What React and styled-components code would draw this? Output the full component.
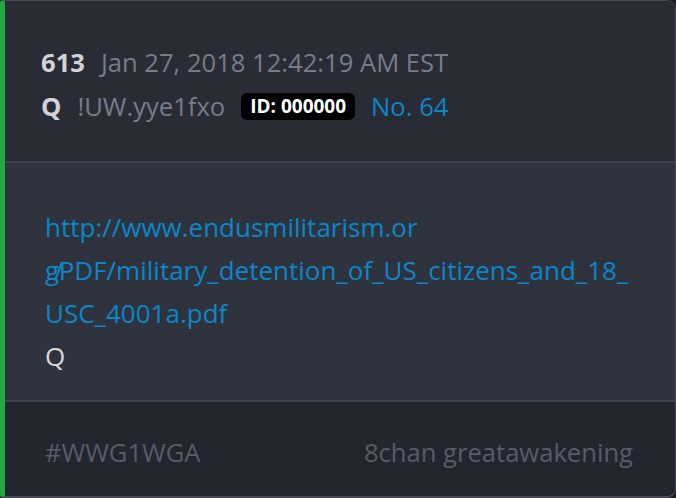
import React from 'react';
import styled, { createGlobalStyle } from 'styled-components';

const GlobalStyle = createGlobalStyle`
  html, body {
    margin: 0;
    padding: 0;
    background: #1c1e24;
  }
  body {
    font-family: 'Open Sans', 'Noto Sans', sans-serif;
  }
`;

const Card = styled.article`
  box-sizing: border-box;
  width: 676px;
  height: 498px;
  display: flex;
  flex-direction: column;
  border: 1px solid #464a54;
  border-bottom-width: 2px;
  border-left: 5px solid #22a845;
  border-radius: 3px 9px 9px 4px;
  overflow: hidden;
  background: #22262e;
`;

const Header = styled.header`
  box-sizing: border-box;
  height: 162px;
  background: #292c35;
  padding: 39px 36px 0;
  border-bottom: 2px solid #3c404a;
`;

const MetaRow = styled.div`
  display: flex;
  align-items: center;
  gap: 16px;
  height: 44px;
  font-size: 25.6px;
  color: #777c8a;
`;

const Strong = styled.span`
  font-weight: 700;
  color: #d3d3d6;
`;

const Badge = styled.span`
  background: #000;
  color: #fff;
  font-weight: 700;
  font-size: 19px;
  line-height: 27px;
  padding: 0 9px;
  border-radius: 6px;
`;

const Link = styled.a`
  color: #0a86c9;
  text-decoration: none;
`;

const Body = styled.section`
  flex: 1;
  background: #2e333d;
  padding: 43px 40px 0;
  border-bottom: 2px solid #3e424c;
  font-size: 26px;
  line-height: 43px;
  color: #d8d8dc;
`;

const Url = styled(Link)`
  display: block;
`;

const UrlLine = styled.span`
  display: block;
  white-space: nowrap;
`;

const Squeezed = styled.span`
  letter-spacing: -5px;
`;

const Footer = styled.footer`
  box-sizing: border-box;
  display: flex;
  justify-content: space-between;
  align-items: center;
  height: 94px;
  padding: 6px 42px 0 40px;
  font-size: 25.6px;
  color: #575c68;
`;

export default function App() {
  return (
    <>
      <GlobalStyle />
      <Card>
        <Header>
          <MetaRow>
            <Strong>613</Strong>
            <span>Jan 27, 2018 12:42:19 AM EST</span>
          </MetaRow>
          <MetaRow>
            <Strong>Q</Strong>
            <span>!UW.yye1fxo</span>
            <Badge>ID: 000000</Badge>
            <Link href="#">No. 64</Link>
          </MetaRow>
        </Header>
        <Body>
          <Url href="#">
            <UrlLine>http://www.endusmilitarism.or</UrlLine>
            <UrlLine>
              <Squeezed>g/</Squeezed>PDF/military_detention_of_US_citizens_and_18_
            </UrlLine>
            <UrlLine>USC_4001a.pdf</UrlLine>
          </Url>
          <div>Q</div>
        </Body>
        <Footer>
          <span>#WWG1WGA</span>
          <span>8chan greatawakening</span>
        </Footer>
      </Card>
    </>
  );
}
